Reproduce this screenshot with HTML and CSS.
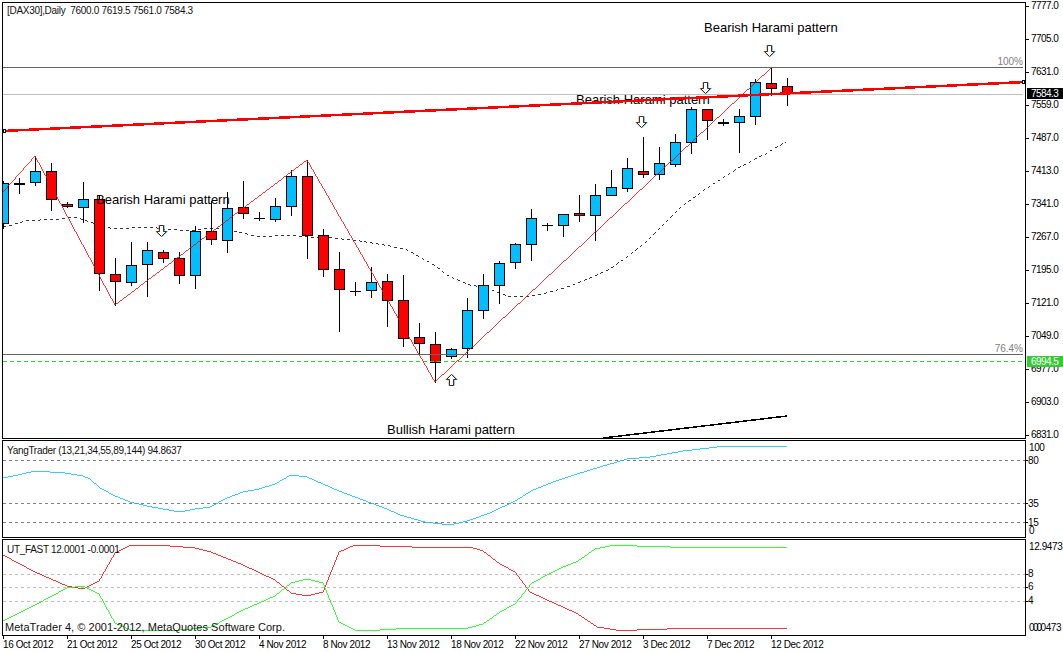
FILE: index.html
```html
<!DOCTYPE html>
<html lang="en">
<head>
    <meta charset="UTF-8">
    <title>DAX30 Daily</title>
    <link rel="stylesheet" href="styles.css">
</head>
<body>
    <div class="terminal">
        <!-- price window -->
        <div class="pane pane-main">
            <div class="plot">
                <svg class="chart" width="1022" height="435" viewBox="3 3 1022 435">
                    <defs>
                        <path id="arrow-down" d="M-2 0.5h4v6h3l-5 5l-5 -5h3z"/>
                        <path id="arrow-up" d="M-2 11.5h4v-6h3l-5 -5l-5 5h3z"/>
                    </defs>

                    <!-- moving average -->
                    <polyline class="ma" points="3,227 12,225 26,221 40,220 62,219 75,217 90,222 105,227 115,229 130,228 150,227 163,229 180,230 195,230 210,228 227,230 243,233 258,237 275,236 291,235 307,237 333,238 360,241 390,246 407,250 420,257 437,267 450,277 470,285 487,288 507,296 527,297 543,294 567,287 590,278 610,269 627,257 648,240 660,228 680,208 707,188 740,167 763,155 786,142"/>

                    <!-- candles -->
                    <g class="candles">
                        <path d="M3.5 181V229"/><rect class="up" x="-1.5" y="183.5" width="10" height="40"/>
                        <path d="M19.5 178V194"/><rect class="dn" x="14.5" y="183.5" width="10" height="1"/>
                        <path d="M35.5 156V186"/><rect class="up" x="30.5" y="171.5" width="10" height="11"/>
                        <path d="M51.5 163V211"/><rect class="dn" x="46.5" y="171.5" width="10" height="28"/>
                        <path d="M67.5 202V208"/><rect class="dn" x="62.5" y="204.5" width="10" height="2"/>
                        <path d="M83.5 182V223"/><rect class="up" x="78.5" y="199.5" width="10" height="8"/>
                        <path d="M99.5 196V291"/><rect class="dn" x="94.5" y="199.5" width="10" height="74"/>
                        <path d="M115.5 258V306"/><rect class="dn" x="110.5" y="274.5" width="10" height="7"/>
                        <path d="M131.5 242V286"/><rect class="up" x="126.5" y="265.5" width="10" height="17"/>
                        <path d="M147.5 242V297"/><rect class="up" x="142.5" y="250.5" width="10" height="14"/>
                        <path d="M163.5 250V263"/><rect class="dn" x="158.5" y="252.5" width="10" height="6"/>
                        <path d="M179.5 252V284"/><rect class="dn" x="174.5" y="258.5" width="10" height="17"/>
                        <path d="M195.5 226V289"/><rect class="up" x="190.5" y="231.5" width="10" height="44"/>
                        <path d="M211.5 201V245"/><rect class="dn" x="206.5" y="231.5" width="10" height="8"/>
                        <path d="M227.5 192V253"/><rect class="up" x="222.5" y="208.5" width="10" height="32"/>
                        <path d="M243.5 181V219"/><rect class="dn" x="238.5" y="207.5" width="10" height="6"/>
                        <path d="M259.5 212V221M254 218.5H265"/>
                        <path d="M275.5 198V222"/><rect class="up" x="270.5" y="206.5" width="10" height="13"/>
                        <path d="M291.5 170V216"/><rect class="up" x="286.5" y="176.5" width="10" height="30"/>
                        <path d="M307.5 160V259"/><rect class="dn" x="302.5" y="176.5" width="10" height="59"/>
                        <path d="M323.5 229V277"/><rect class="dn" x="318.5" y="235.5" width="10" height="34"/>
                        <path d="M339.5 252V332"/><rect class="dn" x="334.5" y="269.5" width="10" height="20"/>
                        <path d="M355.5 282V296M350 291.5H361"/>
                        <path d="M371.5 267V298"/><rect class="up" x="366.5" y="282.5" width="10" height="8"/>
                        <path d="M387.5 274V327"/><rect class="dn" x="382.5" y="281.5" width="10" height="19"/>
                        <path d="M403.5 275V347"/><rect class="dn" x="398.5" y="300.5" width="10" height="38"/>
                        <path d="M419.5 323V355"/><rect class="dn" x="414.5" y="337.5" width="10" height="6"/>
                        <path d="M435.5 332V383"/><rect class="dn" x="430.5" y="344.5" width="10" height="18"/>
                        <path d="M451.5 348V359"/><rect class="up" x="446.5" y="349.5" width="10" height="7"/>
                        <path d="M467.5 298V358"/><rect class="up" x="462.5" y="310.5" width="10" height="38"/>
                        <path d="M483.5 274V319"/><rect class="up" x="478.5" y="285.5" width="10" height="25"/>
                        <path d="M499.5 261V304"/><rect class="up" x="494.5" y="263.5" width="10" height="22"/>
                        <path d="M515.5 243V269"/><rect class="up" x="510.5" y="244.5" width="10" height="18"/>
                        <path d="M531.5 209V261"/><rect class="up" x="526.5" y="218.5" width="10" height="26"/>
                        <path d="M547.5 223V231M542 225.5H553"/>
                        <path d="M563.5 214V237"/><rect class="up" x="558.5" y="214.5" width="10" height="11"/>
                        <path d="M579.5 195V222"/><rect class="dn" x="574.5" y="213.5" width="10" height="2"/>
                        <path d="M595.5 184V241"/><rect class="up" x="590.5" y="195.5" width="10" height="20"/>
                        <path d="M611.5 170V196"/><rect class="up" x="606.5" y="187.5" width="10" height="8"/>
                        <path d="M627.5 158V192"/><rect class="up" x="622.5" y="168.5" width="10" height="20"/>
                        <path d="M643.5 137V178"/><rect class="dn" x="638.5" y="171.5" width="10" height="3"/>
                        <path d="M659.5 147V180"/><rect class="up" x="654.5" y="163.5" width="10" height="11"/>
                        <path d="M675.5 134V167"/><rect class="up" x="670.5" y="142.5" width="10" height="22"/>
                        <path d="M691.5 107V154"/><rect class="up" x="686.5" y="109.5" width="10" height="33"/>
                        <path d="M707.5 109V140"/><rect class="dn" x="702.5" y="109.5" width="10" height="11"/>
                        <path d="M723.5 119V126"/><rect class="dn" x="718.5" y="122.5" width="10" height="1"/>
                        <path d="M739.5 109V153"/><rect class="up" x="734.5" y="116.5" width="10" height="6"/>
                        <path d="M755.5 79V125"/><rect class="up" x="750.5" y="82.5" width="10" height="34"/>
                        <path d="M771.5 68V96"/><rect class="dn" x="766.5" y="83.5" width="10" height="5"/>
                        <path d="M787.5 78V106"/><rect class="dn" x="782.5" y="86.5" width="10" height="8"/>
                    </g>

                    <!-- fibo + levels -->
                    <path class="fibo" d="M3 67.5H1023M3 354.5H1023"/>
                    <path class="fibo-light" d="M3 94.5H1023"/>
                    <path class="bid-line" d="M3 361.5H1025"/>
                    <text class="fibo-label" x="1023" y="65">100%</text>
                    <text class="fibo-label" x="1023" y="352">76.4%</text>

                    <!-- pattern labels -->
                    <text class="pattern" x="704" y="32">Bearish Harami pattern</text>
                    <text class="pattern" x="576" y="104">Bearish Harami pattern</text>
                    <text class="pattern" x="96" y="204">Bearish Harami pattern</text>
                    <text class="pattern" x="387" y="434">Bullish Harami pattern</text>

                    <!-- zigzag -->
                    <polyline class="zigzag" points="3,192 35,156 115,305 307,160 435,382 771,68"/>

                    <!-- trend lines -->
                    <polyline class="trend" points="3,131 1025,82"/>
                    <polyline class="trend-black" points="603,438 787,416"/>
                    <rect class="handle" x="3.5" y="129.5" width="2" height="3"/>
                    <rect class="handle" x="1022.5" y="80.5" width="2" height="3"/>

                    <!-- harami arrows -->
                    <g class="arrows">
                        <use href="#arrow-down" x="161.5" y="225"/>
                        <use href="#arrow-down" x="641.5" y="116"/>
                        <use href="#arrow-down" x="705.5" y="82"/>
                        <use href="#arrow-down" x="769.5" y="45"/>
                        <use href="#arrow-up" x="451.5" y="374"/>
                    </g>

                    <text class="legend" x="7" y="14">[DAX30],Daily&#160;&#160;7600.0 7619.5 7561.0 7584.3</text>
                </svg>
            </div>
            <div class="axis axis-main">
                <div class="tick">7777.0</div>
                <div class="tick">7705.0</div>
                <div class="tick">7631.0</div>
                <div class="tick">7559.0</div>
                <div class="tick">7487.0</div>
                <div class="tick">7413.0</div>
                <div class="tick">7341.0</div>
                <div class="tick">7267.0</div>
                <div class="tick">7195.0</div>
                <div class="tick">7121.0</div>
                <div class="tick">7049.0</div>
                <div class="tick">6977.0</div>
                <div class="tick">6903.0</div>
                <div class="tick">6831.0</div>
                <div class="price-tag tag-last">7584.3</div>
                <div class="price-tag tag-bid">6994.5</div>
            </div>
        </div>

        <!-- YangTrader -->
        <div class="pane pane-yang">
            <div class="plot">
                <svg class="chart" width="1022" height="96" viewBox="3 441 1022 96">
                    <path class="level" d="M3 460.5H1025M3 503.5H1025M3 522.5H1025"/>
                    <polyline class="line-blue" points="3,478 13,476 22,474 35,471 50,472 65,473 83,476 90,479 100,488 115,496 130,502 147,506 163,509 180,512 195,509 210,507 227,498 243,492 259,489 275,484 291,475 307,477 323,484 339,491 355,497 371,503 387,509 400,515 425,522 450,525 467,521 490,513 515,501 533,490 553,482 577,474 600,467 627,459 650,457 683,451 717,447 747,446 787,446"/>
                    <text class="legend" x="7" y="454">YangTrader (13,21,34,55,89,144) 94.8637</text>
                </svg>
            </div>
            <svg class="axis-scale" width="37" height="98" viewBox="1026 440 37 98">
                <path class="scale-tick" d="M1026 460.5H1028M1026 503.5H1028M1026 522.5H1028"/>
                <text x="1029" y="451">100</text>
                <text x="1028" y="464">80</text>
                <text x="1028" y="507">35</text>
                <text x="1028" y="526">15</text>
                <text x="1029" y="534">0</text>
            </svg>
        </div>

        <!-- UT_FAST -->
        <div class="pane pane-fast">
            <div class="plot">
                <svg class="chart" width="1022" height="95" viewBox="3 540 1022 95">
                    <path class="level-light" d="M3 574.5H1025M3 587.5H1025M3 601.5H1025"/>
                    <polyline class="line-red" points="3,555 35,572 67,586 83,589 99,581 115,553 131,545 170,546 195,548 211,552 243,565 275,580 291,593 307,596 323,592 339,552 355,545 380,546 412,547 470,547 483,551 500,564 515,572 530,592 547,600 563,607 578,614 597,627 610,629 622,631 637,630 667,629 787,628"/>
                    <polyline class="line-green" points="3,621 35,605 67,588 83,586 99,594 115,623 131,630 170,631 211,627 243,610 275,596 291,583 307,579 323,583 339,622 355,630 380,630 412,628 468,628 483,624 500,612 515,604 532,583 547,575 563,567 578,561 595,549 610,546 622,545 637,546 667,546 670,547 787,547"/>
                    <text class="legend" x="7" y="553">UT_FAST 12.0001 -0.0001</text>
                    <text class="copyright" x="5" y="631">MetaTrader 4, © 2001-2012, MetaQuotes Software Corp.</text>
                </svg>
            </div>
            <svg class="axis-scale" width="37" height="97" viewBox="1026 539 37 97">
                <path class="scale-tick" d="M1026 574.5H1028M1026 587.5H1028M1026 601.5H1028"/>
                <text x="1029" y="550">12.9473</text>
                <text x="1028" y="577">8</text>
                <text x="1028" y="590">6</text>
                <text x="1028" y="604">4</text>
                <text x="1029" y="631">0.0</text>
                <text x="1033" y="631">0.0473</text>
            </svg>
        </div>

        <!-- time axis -->
        <div class="dates">
            <div class="date">16 Oct 2012</div>
            <div class="date">21 Oct 2012</div>
            <div class="date">25 Oct 2012</div>
            <div class="date">30 Oct 2012</div>
            <div class="date">4 Nov 2012</div>
            <div class="date">8 Nov 2012</div>
            <div class="date">13 Nov 2012</div>
            <div class="date">18 Nov 2012</div>
            <div class="date">22 Nov 2012</div>
            <div class="date">27 Nov 2012</div>
            <div class="date">3 Dec 2012</div>
            <div class="date">7 Dec 2012</div>
            <div class="date">12 Dec 2012</div>
        </div>
    </div>
</body>
</html>
```

FILE: styles.css
```css
body {
    margin: 0;
    background-color: #fff;
    color: #000;
    font-family: "Liberation Sans", Arial, sans-serif;
    font-size: 10px;
}

.terminal {
    width: 1063px;
    height: 652px;
    padding: 2px 0 0 2px;
    box-sizing: border-box;
    overflow: hidden;
    display: flex;
    flex-direction: column;
    gap: 1px;
}

.pane {
    display: flex;
    flex-shrink: 0;
}

.pane-main {
    height: 437px;
}

.pane-yang {
    height: 98px;
}

.pane-fast {
    height: 97px;
}

.plot {
    width: 1024px;
    box-sizing: border-box;
    border: 1px solid #000;
    flex-shrink: 0;
}

.chart {
    display: block;
}

/* price axis */
.axis {
    position: relative;
    width: 37px;
    flex-shrink: 0;
    margin-top: -2px;
    display: flex;
    flex-direction: column;
    gap: 21px;
}

.tick {
    height: 12px;
    line-height: 12px;
    display: flex;
    align-items: center;
    letter-spacing: -0.55px;
}

.tick::before {
    content: "";
    width: 3px;
    height: 1px;
    margin-right: 2px;
    background-color: #000;
}

.price-tag {
    position: absolute;
    left: 1px;
    right: 0;
    height: 11px;
    line-height: 11px;
    padding-left: 4px;
    color: #fff;
    letter-spacing: -0.55px;
}

.tag-last {
    top: 88px;
    background-color: #000;
}

.tag-bid {
    top: 356px;
    background-color: #32cd32;
}

.axis-scale {
    display: block;
    flex-shrink: 0;
}

.axis-scale text {
    font-size: 10px;
    letter-spacing: -0.4px;
    fill: #000;
}

.scale-tick {
    stroke: #000;
    fill: none;
    shape-rendering: crispEdges;
}

/* chart drawing */
.candles path,
.candles rect {
    stroke: #000;
    stroke-width: 1;
    shape-rendering: crispEdges;
}

.up {
    fill: #00bfff;
}

.dn {
    fill: #f00;
}

.ma {
    fill: none;
    stroke: #000;
    stroke-width: 0.8;
    stroke-dasharray: 3 3;
    shape-rendering: crispEdges;
}

.fibo,
.fibo-light,
.bid-line,
.level,
.level-light {
    fill: none;
    stroke-width: 1;
    shape-rendering: crispEdges;
}

.fibo {
    stroke: #666;
}

.fibo-light {
    stroke: #c0c0c0;
}

.bid-line {
    stroke: #32cd32;
    stroke-dasharray: 4 3;
}

.level {
    stroke: #808080;
    stroke-dasharray: 3 3;
}

.level-light {
    stroke: #c0c0c0;
    stroke-dasharray: 3 3;
}

.fibo-label {
    font-size: 10px;
    fill: #808080;
    text-anchor: end;
}

.pattern {
    font-size: 13px;
    fill: #000;
}

.zigzag,
.line-red {
    fill: none;
    stroke: #f00;
    stroke-width: 0.8;
    shape-rendering: crispEdges;
}

.line-green {
    fill: none;
    stroke: #0f0;
    stroke-width: 0.8;
    shape-rendering: crispEdges;
}

.line-blue {
    fill: none;
    stroke: #00bfff;
    stroke-width: 0.8;
    shape-rendering: crispEdges;
}

.trend {
    fill: none;
    stroke: #f00;
    stroke-width: 2.5;
    shape-rendering: crispEdges;
}

.trend-black {
    fill: none;
    stroke: #000;
    stroke-width: 1.5;
    shape-rendering: crispEdges;
}

.handle {
    fill: #fff;
    stroke: #000;
    shape-rendering: crispEdges;
}

.arrows {
    filter: drop-shadow(1px 0 0 rgba(70, 160, 235, 0.6)) drop-shadow(-1px 0 0 rgba(240, 160, 60, 0.5));
}

.arrows use {
    fill: #fff;
    stroke: #333;
    stroke-width: 1;
}

.legend {
    font-size: 10px;
    letter-spacing: -0.3px;
    fill: #111;
}

.copyright {
    font-size: 11px;
    letter-spacing: 0.04px;
    fill: #111;
}

/* time axis */
.dates {
    display: grid;
    grid-template-columns: repeat(13, 64px);
    margin: -1px 0 0 1px;
}

.date {
    white-space: nowrap;
    line-height: 12px;
    letter-spacing: -0.4px;
}

.date::before {
    content: "";
    display: block;
    width: 1px;
    height: 3px;
    background-color: #000;
}
```
